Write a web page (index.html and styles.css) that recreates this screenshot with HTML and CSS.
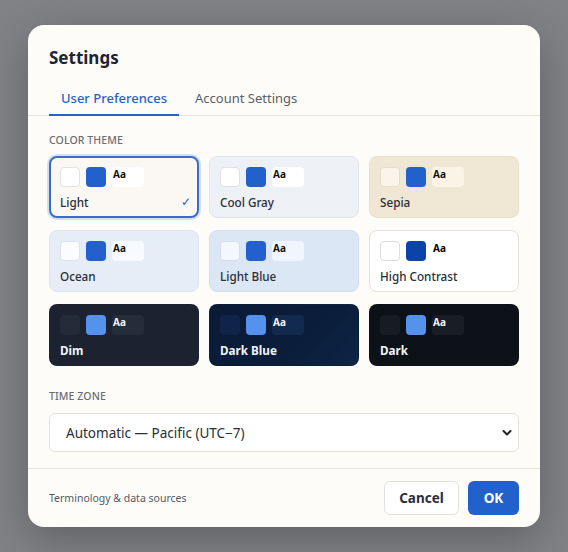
FILE: index.html
```html
<!DOCTYPE html>
<html>
<head>
<meta charset="utf-8">
<link rel="stylesheet" href="styles.css">
</head>
<body>
<div class="backdrop">
  <div class="dialog">
    <div class="header">
      <h1 class="title">Settings</h1>
      <div class="tabs">
        <div class="tab active">User Preferences</div>
        <div class="tab">Account Settings</div>
      </div>
    </div>
    <div class="content">
      <div class="section-label">COLOR THEME</div>
      <div class="grid">
        <div class="card t-light selected">
          <div class="sw"><span class="s1"></span><span class="s2"></span><span class="s3">Aa</span></div>
          <div class="name">Light<span class="check">✓</span></div>
        </div>
        <div class="card t-cool">
          <div class="sw"><span class="s1"></span><span class="s2"></span><span class="s3">Aa</span></div>
          <div class="name">Cool Gray</div>
        </div>
        <div class="card t-sepia">
          <div class="sw"><span class="s1"></span><span class="s2"></span><span class="s3">Aa</span></div>
          <div class="name">Sepia</div>
        </div>
        <div class="card t-ocean">
          <div class="sw"><span class="s1"></span><span class="s2"></span><span class="s3">Aa</span></div>
          <div class="name">Ocean</div>
        </div>
        <div class="card t-lblue">
          <div class="sw"><span class="s1"></span><span class="s2"></span><span class="s3">Aa</span></div>
          <div class="name">Light Blue</div>
        </div>
        <div class="card t-hc">
          <div class="sw"><span class="s1"></span><span class="s2"></span><span class="s3">Aa</span></div>
          <div class="name">High Contrast</div>
        </div>
        <div class="card t-dim dark">
          <div class="sw"><span class="s1"></span><span class="s2"></span><span class="s3">Aa</span></div>
          <div class="name">Dim</div>
        </div>
        <div class="card t-dblue dark">
          <div class="sw"><span class="s1"></span><span class="s2"></span><span class="s3">Aa</span></div>
          <div class="name">Dark Blue</div>
        </div>
        <div class="card t-dark dark">
          <div class="sw"><span class="s1"></span><span class="s2"></span><span class="s3">Aa</span></div>
          <div class="name">Dark</div>
        </div>
      </div>
      <div class="section-label tz">TIME ZONE</div>
      <div class="select">
        <span>Automatic — Pacific (UTC−7)</span>
        <svg class="chev" width="10" height="8" viewBox="0 0 10 8"><path d="M1.5 2 L5 5.5 L8.5 2" fill="none" stroke="#222" stroke-width="2" stroke-linecap="round" stroke-linejoin="round"/></svg>
      </div>
    </div>
    <div class="footer">
      <div class="footnote">Terminology &amp; data sources</div>
      <div class="buttons">
        <div class="btn cancel">Cancel</div>
        <div class="btn ok">OK</div>
      </div>
    </div>
  </div>
</div>
</body>
</html>
```
FILE: styles.css
```css
* { box-sizing: border-box; }
html, body { margin: 0; padding: 0; }
body {
  font-family: "Noto Sans", "Open Sans", sans-serif;
  background: #808285;
  width: 568px;
  height: 552px;
  overflow: hidden;
}
.backdrop {
  width: 568px;
  height: 552px;
  display: flex;
  align-items: center;
  justify-content: center;
}
.dialog {
  width: 512px;
  height: 502px;
  background: #fdfcf8;
  border-radius: 16px;
  box-shadow: 0 12px 40px rgba(0,0,0,0.25);
  display: flex;
  flex-direction: column;
  overflow: hidden;
}
.header {
  padding: 21px 21px 0 21px;
  border-bottom: 1px solid #e6e4df;
}
.title {
  margin: 0;
  font-size: 17px;
  font-weight: 700;
  color: #1d2433;
  line-height: 24px;
}
.tabs {
  display: flex;
  margin-top: 18px;
}
.tab {
  padding: 0 12px 6px 12px;
  font-size: 13px;
  line-height: 20px;
  color: #5b5f66;
  border-bottom: 2px solid transparent;
  margin-bottom: -1px;
  margin-right: 4px;
}
.tab.active {
  color: #2a62c4;
  font-weight: 500;
  border-bottom-color: #2a62c4;
}
.content {
  padding: 17px 21px 0 21px;
  flex: 1;
  border-bottom: 1px solid #e6e4df;
}
.section-label {
  font-size: 10.5px;
  letter-spacing: 0.1px;
  color: #6a6d73;
  font-weight: 500;
  line-height: 14px;
}
.grid {
  margin-top: 9px;
  display: grid;
  grid-template-columns: repeat(3, 150px);
  column-gap: 10px;
  row-gap: 12px;
}
.card {
  height: 62px;
  border-radius: 8px;
  border: 1px solid transparent;
  padding: 10px 10px 0 10px;
}
.sw {
  display: flex;
  gap: 6px;
  height: 20px;
}
.sw span { display: block; height: 20px; border-radius: 4px; }
.s1 { width: 20px; border: 1px solid #e2e2e2; }
.s2 { width: 20px; }
.s3 {
  width: 32px;
  font-size: 10px;
  font-weight: 700;
  line-height: 14px;
  padding-left: 1px;
  color: #111;
}
.name {
  margin-top: 6px;
  font-size: 11.7px;
  line-height: 18px;
  color: #2a2e36;
  display: flex;
  justify-content: space-between;
  font-weight: 500;
}
.check { color: #2a62c4; font-size: 12px; margin-right: -3px; }
.t-light { background: #fbf8f3; border: 2px solid #3a6dc9; box-shadow: 0 0 0 2px rgba(58,109,201,0.2); padding: 9px 9px 0 9px; }
.t-light .s1 { background: #fff; border-color: #e4e2dc; }
.t-light .s2 { background: #2260cc; }
.t-light .s3 { background: #fff; }
.t-cool { background: #edf0f4; border-color: #e2e5ea; }
.t-cool .s1 { background: #fff; border-color: #dde1e7; }
.t-cool .s2 { background: #2260cc; }
.t-cool .s3 { background: #fff; }
.t-sepia { background: #f0e6d4; border-color: #eadfcb; }
.t-sepia .s1 { background: #faf4ea; border-color: #e8ddc8; }
.t-sepia .s2 { background: #2260cc; }
.t-sepia .s3 { background: #fbf3e6; }
.t-ocean { background: #e6edf7; border-color: #dde5f0; }
.t-ocean .s1 { background: #fafcff; border-color: #dbe2ec; }
.t-ocean .s2 { background: #2260cc; }
.t-ocean .s3 { background: #f7faff; }
.t-lblue { background: #dce7f6; border-color: #d3dff0; }
.t-lblue .s1 { background: #f4f8fe; border-color: #d4def0; }
.t-lblue .s2 { background: #2260cc; }
.t-lblue .s3 { background: #f1f6fe; }
.t-hc { background: #ffffff; border-color: #e4e2dc; }
.t-hc .s1 { background: #fff; border-color: #dcdcdc; }
.t-hc .s2 { background: #0b44a8; }
.t-hc .s3 { background: #fff; color: #000; }
.dark .name { color: #f2f4f8; font-weight: 700; }
.dark .s3 { color: #f2f4f8; }
.dark .s2 { background: #5592ef; }
.t-dim { background: #1c2230; }
.t-dim .s1 { background: #232a38; border-color: #232a38; }
.t-dim .s3 { background: #252c3a; }
.t-dblue { background: linear-gradient(135deg, #0b1b36 0%, #0a1d3a 60%, #0e2547 100%); }
.t-dblue .s1 { background: #10244a; border-color: #10244a; }
.t-dblue .s3 { background: #132a4f; }
.t-dark { background: #0d1118; }
.t-dark .s1 { background: #171c24; border-color: #171c24; }
.t-dark .s3 { background: #181d26; }
.tz { margin-top: 23px; }
.select {
  margin-top: 10px;
  height: 39px;
  border: 1px solid #e2e0da;
  border-radius: 6px;
  background: #fff;
  display: flex;
  align-items: center;
  justify-content: space-between;
  padding: 0 4px 0 16px;
  font-size: 13.5px;
  color: #2a2e36;
}
.chev { margin-right: 2px; }
.footer {
  height: 58px;
  padding: 0 21px;
  display: flex;
  align-items: center;
  justify-content: space-between;
}
.footnote {
  font-size: 10.5px;
  color: #555a62;
}
.buttons { display: flex; gap: 9px; }
.btn {
  height: 34px;
  border-radius: 6px;
  display: flex;
  align-items: center;
  justify-content: center;
  font-size: 13.5px;
  font-weight: 700;
}
.cancel {
  width: 75px;
  background: #fff;
  border: 1px solid #e2e0da;
  color: #2a2e3a;
}
.ok {
  width: 51px;
  background: #2260cc;
  color: #fff;
}
```
